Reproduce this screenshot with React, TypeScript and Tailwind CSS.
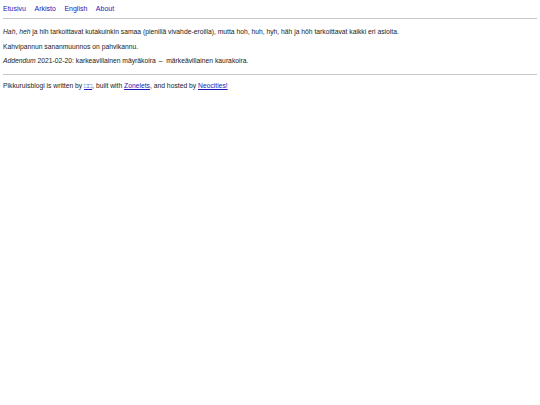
import React from "react";

export default function App() {
  return (
    <div className="min-h-[405px] bg-white px-[3px] pt-[4px] text-[6.75px] leading-[10px] text-[#222] font-['Liberation_Sans',Arial,sans-serif]">
      <nav className="flex gap-[8.5px] text-[#1a1ab8] text-[7px]">
        <a>Etusivu</a>
        <a>Arkisto</a>
        <a>English</a>
        <a>About</a>
      </nav>
      <hr className="mt-[4px] border-t border-[#c8c8c8]" />
      <main className="mt-[8px] flex flex-col gap-[4.5px]">
        <p>
          <em>Hah</em>, <em>heh</em> ja hih tarkoittavat kutakuinkin samaa (pienillä vivahde-eroilla), mutta hoh, huh, hyh, häh ja höh tarkoittavat kaikki eri asioita.
        </p>
        <p>Kahvipannun sananmuunnos on pahvikannu.</p>
        <p>
          <em>Addendum</em> 2021-02-20: karkeavillainen mäyräkoira ⇔ märkeävillainen kaurakoira.
        </p>
      </main>
      <hr className="mt-[8px] border-t border-[#c8c8c8]" />
      <footer className="mt-[6px]">
        Pikkuruisblogi is written by <a className="text-[#1a1ab8] underline">□□</a>, built with{" "}
        <a className="text-[#1a1ab8] underline">Zonelets</a>, and hosted by{" "}
        <a className="text-[#1a1ab8] underline">Neocities!</a>
      </footer>
    </div>
  );
}
